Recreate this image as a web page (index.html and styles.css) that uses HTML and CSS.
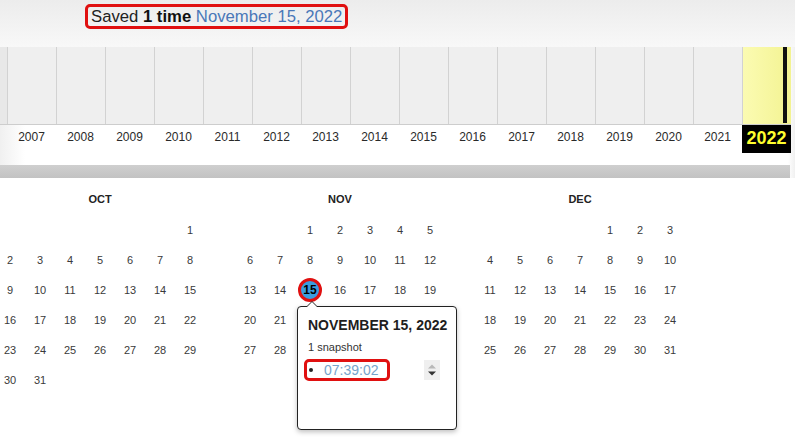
FILE: index.html
```html
<!DOCTYPE html>
<html>
<head>
<meta charset="utf-8">
<link rel="stylesheet" href="styles.css">
</head>
<body>
<div class="top">
  <div class="captures">Saved <b>1 time</b> <a class="capdate">November 15, 2022</a></div>
</div>
<div class="sparkline">
  <div class="bars">
    <div class="yr lead"></div>
    <div class="yr"></div><div class="yr"></div><div class="yr"></div><div class="yr"></div><div class="yr"></div>
    <div class="yr"></div><div class="yr"></div><div class="yr"></div><div class="yr"></div><div class="yr"></div>
    <div class="yr"></div><div class="yr"></div><div class="yr"></div><div class="yr"></div><div class="yr"></div>
    <div class="yr current"><span class="mark"></span></div>
  </div>
  <div class="labels">
    <div class="lbl"></div>
    <div class="lbl">2007</div><div class="lbl">2008</div><div class="lbl">2009</div><div class="lbl">2010</div>
    <div class="lbl">2011</div><div class="lbl">2012</div><div class="lbl">2013</div><div class="lbl">2014</div>
    <div class="lbl">2015</div><div class="lbl">2016</div><div class="lbl">2017</div><div class="lbl">2018</div>
    <div class="lbl">2019</div><div class="lbl">2020</div><div class="lbl">2021</div>
    <div class="lbl current">2022</div>
  </div>
  <div class="scroll"></div>
</div>
<div class="calendar">
  <div class="month">
    <div class="mname">OCT</div>
    <div class="days">
      <span></span><span></span><span></span><span></span><span></span><span></span><span>1</span>
      <span>2</span><span>3</span><span>4</span><span>5</span><span>6</span><span>7</span><span>8</span>
      <span>9</span><span>10</span><span>11</span><span>12</span><span>13</span><span>14</span><span>15</span>
      <span>16</span><span>17</span><span>18</span><span>19</span><span>20</span><span>21</span><span>22</span>
      <span>23</span><span>24</span><span>25</span><span>26</span><span>27</span><span>28</span><span>29</span>
      <span>30</span><span>31</span>
    </div>
  </div>
  <div class="month">
    <div class="mname">NOV</div>
    <div class="days">
      <span></span><span></span><span>1</span><span>2</span><span>3</span><span>4</span><span>5</span>
      <span>6</span><span>7</span><span>8</span><span>9</span><span>10</span><span>11</span><span>12</span>
      <span>13</span><span>14</span>
      <span class="sel"><span class="dot">15</span>
        <div class="pop">
          <div class="ptitle">NOVEMBER 15, 2022</div>
          <div class="psnap">1 snapshot</div>
          <div class="prow">
            <div class="snapitem"><span class="bullet"></span><a class="time">07:39:02</a></div>
            <svg class="spin" width="16" height="20" viewBox="0 0 16 20">
              <rect x="0" y="0" width="16" height="20" fill="#efefef"/>
              <path d="M4 8.5 L8 4.5 L12 8.5 Z" fill="#b8b8b8"/>
              <path d="M4 11.5 L8 15.5 L12 11.5 Z" fill="#333"/>
            </svg>
          </div>
        </div>
      </span>
      <span>16</span><span>17</span><span>18</span><span>19</span>
      <span>20</span><span>21</span><span></span><span></span><span></span><span></span><span></span>
      <span>27</span><span>28</span><span></span><span></span>
    </div>
  </div>
  <div class="month">
    <div class="mname">DEC</div>
    <div class="days">
      <span></span><span></span><span></span><span></span><span>1</span><span>2</span><span>3</span>
      <span>4</span><span>5</span><span>6</span><span>7</span><span>8</span><span>9</span><span>10</span>
      <span>11</span><span>12</span><span>13</span><span>14</span><span>15</span><span>16</span><span>17</span>
      <span>18</span><span>19</span><span>20</span><span>21</span><span>22</span><span>23</span><span>24</span>
      <span>25</span><span>26</span><span>27</span><span>28</span><span>29</span><span>30</span><span>31</span>
    </div>
  </div>
</div>
</body>
</html>
```

FILE: styles.css
```css
html, body {
  margin: 0;
  padding: 0;
}
body {
  font-family: "Liberation Sans", Arial, sans-serif;
  background: #fff;
  color: #333;
  width: 795px;
  height: 440px;
  overflow: hidden;
}
.top {
  height: 47px;
  box-sizing: border-box;
  padding: 4px 0 0 85px;
  background: linear-gradient(#ececec, #f8f8f8);
  display: flex;
  align-items: flex-start;
}
.captures {
  border: 3px solid #e01010;
  border-radius: 5px;
  padding: 0 3px;
  font-size: 16.7px;
  line-height: 19px;
  color: #222;
  white-space: nowrap;
}
.captures b {
  color: #111;
}
.capdate {
  color: #4a78b8;
  text-decoration: none;
}
.sparkline {
  width: 795px;
  background: linear-gradient(90deg, #f0f0f0, #fff 25px, #fff 788px, #f0f0f0);
}
.bars, .labels {
  display: grid;
  grid-template-columns: 7px repeat(16, 49px);
}
.bars {
  height: 77px;
  width: 791px;
  border-bottom: 1px solid #cdcdcd;
}
.yr {
  background: #efefef;
  border-left: 1px solid #d2d2d2;
}
.yr.lead {
  border-left: none;
  background: #e8e8e8;
}
.yr.current {
  background: linear-gradient(90deg, #fbfbb2, #f3f392);
  display: flex;
  justify-content: flex-end;
  padding-right: 4px;
  padding-bottom: 1px;
}
.mark {
  width: 4px;
  background: #111;
}
.labels {
  height: 28px;
}
.lbl {
  font-size: 12px;
  line-height: 25px;
  text-align: center;
  color: #2a2a2a;
}
.lbl.current {
  background: #000;
  color: #ffff2e;
  font-weight: bold;
  font-size: 18px;
  line-height: 27px;
}
.scroll {
  margin-top: 12px;
  width: 790px;
  height: 13px;
  background: linear-gradient(#cfcfcf, #c2c2c2);
}
.calendar {
  display: flex;
  gap: 30px;
  margin-left: -5px;
  padding-top: 11px;
}
.month {
  width: 210px;
}
.mname {
  text-align: center;
  font-size: 11px;
  font-weight: bold;
  line-height: 20px;
  height: 20px;
  margin-bottom: 6px;
  color: #222;
}
.days {
  display: grid;
  grid-template-columns: repeat(7, 30px);
  grid-auto-rows: 30px;
}
.days > span {
  display: flex;
  align-items: center;
  justify-content: center;
  font-size: 11px;
  color: #3a3a3a;
}
.days > .sel {
  position: relative;
}
.dot {
  width: 24px;
  height: 24px;
  box-sizing: border-box;
  border: 3px solid #e01010;
  border-radius: 50%;
  background: #3a9de0;
  color: #000;
  font-weight: bold;
  font-size: 12px;
  display: flex;
  align-items: center;
  justify-content: center;
}
.pop {
  position: absolute;
  left: 2px;
  top: 31px;
  width: 160px;
  height: 124px;
  box-sizing: border-box;
  border: 1px solid #222;
  border-radius: 4px;
  background: #fff;
  box-shadow: 0 2px 5px rgba(0, 0, 0, 0.25);
  padding: 9px 9px 0 10px;
  z-index: 2;
}
.pop::before,
.pop::after {
  content: "";
  position: absolute;
  left: 8px;
  width: 0;
  height: 0;
  border-left: 6px solid transparent;
  border-right: 6px solid transparent;
}
.pop::before {
  top: -6px;
  border-bottom: 6px solid #222;
}
.pop::after {
  top: -5px;
  border-bottom: 6px solid #fff;
}
.ptitle {
  font-size: 14px;
  font-weight: bold;
  line-height: 18px;
  color: #1e1e1e;
  white-space: nowrap;
}
.psnap {
  font-size: 11px;
  line-height: 14px;
  margin-top: 6px;
  color: #333;
}
.prow {
  display: flex;
  align-items: center;
  justify-content: space-between;
  margin-top: 5px;
  margin-left: -4px;
}
.snapitem {
  display: flex;
  align-items: center;
  height: 22px;
  box-sizing: border-box;
  border: 3px solid #e01010;
  border-radius: 5px;
  padding: 0 8px 0 2px;
}
.bullet {
  width: 4px;
  height: 4px;
  border-radius: 50%;
  background: #222;
  margin-right: 11px;
}
.time {
  font-size: 14px;
  color: #76a4cb;
  text-decoration: none;
}
.spin {
  display: block;
  margin-right: 7px;
}
```
